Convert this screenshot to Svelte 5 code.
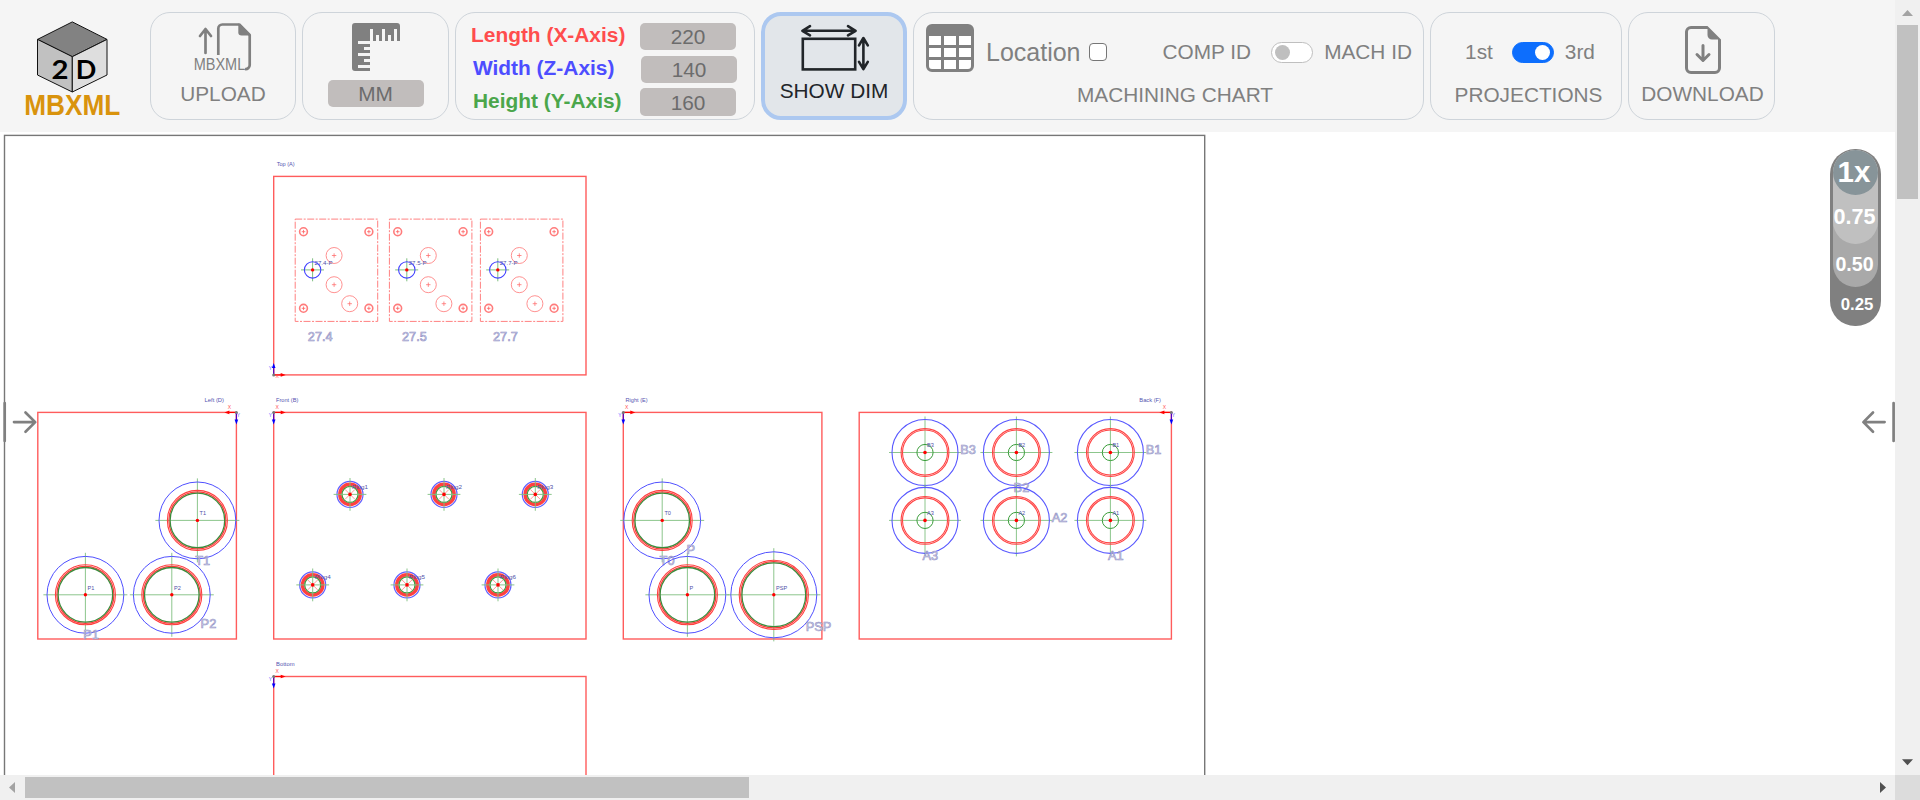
<script>
  const plates = [
    { dx: 0, name: '27.4' },
    { dx: 94.2, name: '27.5' },
    { dx: 185.2, name: '27.7' }
  ];
  const plateBolts = [[303.5, 231.7], [368.9, 231.7], [303.5, 308.3], [368.9, 308.3]];
  const platePorts = [[334.1, 255.5], [334.1, 284.7], [349.7, 303.7]];

  const views = [
    { x: 273.7, y: 176.4, w: 312.3, h: 198.5, title: 'Top (A)', tx: 276.7, ty: 166.3, tw: 18 },
    { x: 37.8, y: 412.4, w: 198.6, h: 226.6, title: 'Left (D)', tx: 204.5, ty: 402.2, tw: 19.5 },
    { x: 273.7, y: 412.4, w: 312.3, h: 226.6, title: 'Front (B)', tx: 276, ty: 402.2, tw: 22.3 },
    { x: 623.3, y: 412.4, w: 198.6, h: 226.6, title: 'Right (E)', tx: 625.6, ty: 402.2, tw: 22 },
    { x: 859.2, y: 412.4, w: 312.2, h: 226.6, title: 'Back (F)', tx: 1139.3, ty: 402.2, tw: 21.7 },
    { x: 273.7, y: 676.5, w: 312.3, h: 226.6, title: 'Bottom', tx: 276, ty: 666.3, tw: 18.5 }
  ];

  const axes = [
    { x: 273.7, y: 374.9, sx: 1, sy: -1 },
    { x: 236.4, y: 412.4, sx: -1, sy: 1 },
    { x: 273.7, y: 412.4, sx: 1, sy: 1 },
    { x: 623.3, y: 412.4, sx: 1, sy: 1 },
    { x: 1171.4, y: 412.4, sx: -1, sy: 1 },
    { x: 273.7, y: 676.5, sx: 1, sy: 1 }
  ];

  const ports = [
    { x: 197.4, y: 520.4, r: 38.4, name: 'T1', lx: 195.3, ly: 564.7 },
    { x: 85.4, y: 594.8, r: 38.4, name: 'P1', lx: 83.2, ly: 638.7 },
    { x: 171.8, y: 594.8, r: 38.4, name: 'P2', lx: 200.6, ly: 628 },
    { x: 662.2, y: 520.4, r: 38.4, name: 'T0', lx: 659.6, ly: 564.5 },
    { x: 687.4, y: 594.8, r: 38.4, name: 'P', lx: 686.5, ly: 553.6 },
    { x: 773.8, y: 594.8, r: 43, name: 'PSP', lx: 805.8, ly: 631 }
  ];

  const plugs = [
    { x: 350, y: 494.4 }, { x: 444, y: 494.4 }, { x: 535.3, y: 494.4 },
    { x: 312.7, y: 584.9 }, { x: 407, y: 584.9 }, { x: 498, y: 584.9 }
  ];

  const backs = [
    { x: 925, y: 452.5, name: 'B3', lx: 960.3, ly: 454 },
    { x: 1016.4, y: 452.5, name: 'B2', lx: 1013.6, ly: 492 },
    { x: 1110.4, y: 452.5, name: 'B1', lx: 1145.7, ly: 454 },
    { x: 925, y: 520.4, name: 'A3', lx: 922.5, ly: 560.2 },
    { x: 1016.4, y: 520.4, name: 'A2', lx: 1051.7, ly: 522.2 },
    { x: 1110.4, y: 520.4, name: 'A1', lx: 1108, ly: 560.2 }
  ];
</script>

<div class="app">
  <header class="toolbar">
    <svg class="logo" width="150" height="132" viewBox="0 0 150 132">
      <g stroke="#111" stroke-width="1" stroke-linejoin="round">
        <path d="M72.3 21.9 107 39.4 72.3 56.7 37.5 39.4Z" fill="#828282" />
        <path d="M37.5 39.4 72.3 56.7V92L37.5 75Z" fill="#c1c1c1" />
        <path d="M107 39.4 72.3 56.7V92L107 75Z" fill="#dedede" />
      </g>
      <text class="cube" x="51.5" y="78.8" textLength="17" lengthAdjust="spacingAndGlyphs">2</text>
      <text class="cube" x="75.8" y="78.8">D</text>
      <text class="brand" x="24.2" y="114.7" textLength="96" lengthAdjust="spacingAndGlyphs">MBXML</text>
    </svg>

    <button class="card upload">
      <svg width="60" height="50" viewBox="193 22 60 50">
        <g fill="none" stroke="#808080" stroke-width="2.7" stroke-linecap="round" stroke-linejoin="round">
          <path d="M205.5 53V29M200 36l5.5-7 5.5 7" />
          <path stroke-linecap="butt" d="M218.3 55V28.5a4 4 0 0 1 4-4h17L249.7 35V65a4 4 0 0 1-4.7 4" />
        </g>
        <path d="M238.3 23.3 250.8 35.5h-9.3a3.2 3.2 0 0 1-3.2-3.2Z" fill="#808080" />
        <text class="mini" x="193.7" y="69.8" textLength="51.5" lengthAdjust="spacingAndGlyphs">MBXML</text>
      </svg>
      <span class="caption">UPLOAD</span>
    </button>

    <button class="card unit">
      <svg width="48" height="48" viewBox="0 0 16 16" fill="#808080">
        <path d="M1 0a1 1 0 0 0-1 1v14a1 1 0 0 0 1 1h5v-1H2v-1h4v-1H4v-1h2v-1H2v-1h4V9H4V8h2V7H2V6h4V2h1v4h1V4h1v2h1V2h1v4h1V4h1v2h1V2h1v4h1V1a1 1 0 0 0-1-1z" />
      </svg>
      <span class="field">MM</span>
    </button>

    <section class="card dims">
      <div class="row"><b class="x">Length (X-Axis)</b><span class="field">220</span></div>
      <div class="row"><b class="z">Width (Z-Axis)</b><span class="field shifted">140</span></div>
      <div class="row"><b class="y">Height (Y-Axis)</b><span class="field tall">160</span></div>
    </section>

    <button class="card show">
      <svg width="70" height="50" viewBox="800 23 70 50" fill="none" stroke="#212529" stroke-width="2.6" stroke-linecap="round" stroke-linejoin="round">
        <rect x="802.8" y="38.8" width="52.4" height="30.6" stroke-linejoin="miter" />
        <path d="M803 30.8H855M810 26.2l-7.6 4.6 7.6 4.6M848 26.2l7.6 4.6-7.6 4.6" />
        <path d="M863.4 38.5V68.5M859 45.3l4.4-7.3 4.4 7.3M859 61.8l4.4 7.3 4.4-7.3" />
      </svg>
      <span class="caption">SHOW DIM</span>
    </button>

    <section class="card chart">
      <div class="top">
        <svg class="table" width="48" height="48" viewBox="0 0 16 16">
          <rect x="1" y="3" width="14" height="12" fill="#fff" />
          <path fill="#808080" d="M0 2a2 2 0 0 1 2-2h12a2 2 0 0 1 2 2v12a2 2 0 0 1-2 2H2a2 2 0 0 1-2-2zm15 2h-4v3h4zm0 4h-4v3h4zm0 4h-4v3h3a1 1 0 0 0 1-1zm-5 3v-3H6v3zm-5 0v-3H1v2a1 1 0 0 0 1 1zm-4-4h4V8H1zm0-4h4V4H1zm5-3v3h4V4zm4 4H6v3h4z" />
        </svg>
        <span class="location">Location</span>
        <span class="check"></span>
        <span class="caption comp">COMP ID</span>
        <span class="switch"></span>
        <span class="caption mach">MACH ID</span>
      </div>
      <span class="caption title">MACHINING CHART</span>
    </section>

    <section class="card projections">
      <div class="top">
        <span class="caption">1st</span>
        <span class="switch on"></span>
        <span class="caption">3rd</span>
      </div>
      <span class="caption title">PROJECTIONS</span>
    </section>

    <button class="card download">
      <svg width="48" height="48" viewBox="0 0 16 16" fill="#808080">
        <path d="M8.5 6.5a.5.5 0 0 0-1 0v3.793L6.354 9.146a.5.5 0 1 0-.708.708l2 2a.5.5 0 0 0 .708 0l2-2a.5.5 0 0 0-.708-.708L8.5 10.293z" />
        <path d="M14 14V4.5L9.5 0H4a2 2 0 0 0-2 2v12a2 2 0 0 0 2 2h8a2 2 0 0 0 2-2M9.5 3A1.5 1.5 0 0 0 11 4.5h2V14a1 1 0 0 1-1 1H4a1 1 0 0 1-1-1V2a1 1 0 0 1 1-1h5.5z" />
      </svg>
      <span class="caption">DOWNLOAD</span>
    </button>
  </header>

  <div class="vbar">
    <svg width="25" height="25"><path d="M7 16l5.5-6 5.5 6z" fill="#a3a3a3" /></svg>
    <div class="vthumb"></div>
    <svg class="end" width="25" height="25"><path d="M7 9.3l5.5 6 5.5-6z" fill="#505050" /></svg>
  </div>

  <main class="canvas">
    <svg class="drawing" width="1895" height="643" viewBox="0 132 1895 643">
      <rect x="4.5" y="135.4" width="1200.2" height="900" fill="#fff" stroke="#777" stroke-width="1.4" />

      {#each views as v}
        <rect x={v.x} y={v.y} width={v.w} height={v.h} fill="none" stroke="#ff5c5c" stroke-width="1.4" />
        <text class="vtitle" x={v.tx} y={v.ty} textLength={v.tw} lengthAdjust="spacingAndGlyphs">{v.title}</text>
      {/each}

      {#each plates as p}
        <g transform="translate({p.dx} 0)">
          <rect x="295.2" y="219.1" width="82.5" height="102.3" fill="none" stroke="#ff8080" stroke-width="1" stroke-dasharray="7 1.5 2 1.5" />
          {#each plateBolts as [x, y]}
            <circle cx={x} cy={y} r="3.9" fill="none" stroke="#ff7c7c" stroke-width="1.6" />
            <path d="M{x - 1.8} {y}h3.6M{x} {y - 1.8}v3.6" stroke="#ff6060" stroke-width=".8" />
          {/each}
          {#each platePorts as [x, y]}
            <circle cx={x} cy={y} r="8" fill="none" stroke="#ff8585" stroke-width=".9" />
            <path d="M{x - 2.2} {y}h4.4M{x} {y - 2.2}v4.4" stroke="#ff7070" stroke-width=".8" />
          {/each}
          <path d="M301 269.9h23M312.6 258.3v23" stroke="#5fb05f" stroke-width=".8" />
          <circle cx="312.6" cy="269.9" r="8.2" fill="none" stroke="#4040ff" stroke-width="1.1" />
          <circle cx="312.6" cy="269.9" r="1.7" fill="#f00" />
          <text class="tag" x="314.5" y="265" textLength="18" lengthAdjust="spacingAndGlyphs">{p.name}-P</text>
          <text class="label" x="307.8" y="341.4" textLength="24.8" lengthAdjust="spacingAndGlyphs">{p.name}</text>
        </g>
      {/each}

      {#each ports as p}
        <path d="M{p.x - p.r - 3.6} {p.y}h{2 * p.r + 7.2}M{p.x} {p.y - p.r - 3.6}v{2 * p.r + 7.2}" stroke="#7fbf7f" stroke-width=".9" />
        <g fill="none">
          <circle cx={p.x} cy={p.y} r={p.r} stroke="#5050ff" stroke-width="1" />
          <circle cx={p.x} cy={p.y} r={p.r - 8.4} stroke="#ff4040" stroke-width="1.1" />
          <circle cx={p.x} cy={p.y} r={p.r - 9.9} stroke="#ff3838" stroke-width="1.2" />
          <circle cx={p.x} cy={p.y} r={p.r - 11.1} stroke="#3c8a3c" stroke-width="1.3" />
        </g>
        <circle cx={p.x} cy={p.y} r="1.7" fill="#f00" />
        <text class="tag" x={p.x + 2.2} y={p.y - 5.2}>{p.name}</text>
        <text class="label" x={p.lx} y={p.ly}>{p.name}</text>
      {/each}

      {#each plugs as p, i}
        <g fill="none">
          <circle cx={p.x} cy={p.y} r="13" stroke="#6060ff" stroke-width="1.2" />
          <circle cx={p.x} cy={p.y} r="10.2" stroke="#ff4040" stroke-width="3.4" />
          <circle cx={p.x} cy={p.y} r="8" stroke="#3f9a3f" stroke-width="1.2" />
          <path d="M{p.x - 5} {p.y - 5}l10 10m0-10l-10 10" stroke="#ff8080" stroke-width=".8" />
          <path d="M{p.x - 16.4} {p.y}h32.8M{p.x} {p.y - 16.4}v32.8" stroke="#7fbf7f" stroke-width=".9" />
        </g>
        <circle cx={p.x} cy={p.y} r="1.8" fill="#f00" />
        <text class="tag" x={p.x + 2} y={p.y - 5.5} textLength="16" lengthAdjust="spacingAndGlyphs">Plug{i + 1}</text>
      {/each}

      {#each backs as b}
        <path d="M{b.x - 36} {b.y}h72M{b.x} {b.y - 36}v72" stroke="#7fbf7f" stroke-width=".9" />
        <g fill="none">
          <circle cx={b.x} cy={b.y} r="33" stroke="#5858ff" stroke-width="1.1" />
          <circle cx={b.x} cy={b.y} r="23.9" stroke="#ff4444" stroke-width="1.1" />
          <circle cx={b.x} cy={b.y} r="22.5" stroke="#ff4444" stroke-width="1.1" />
          <circle cx={b.x} cy={b.y} r="8.1" stroke="#3a9d3a" stroke-width="1" />
        </g>
        <circle cx={b.x} cy={b.y} r="1.8" fill="#f00" />
        <text class="tag" x={b.x + 2} y={b.y - 5.2}>{b.name}</text>
        <text class="label" x={b.lx} y={b.ly}>{b.name}</text>
      {/each}

      {#each axes as a}
        <path d="M{a.x} {a.y}h{a.sx * 8}" stroke="#f00" stroke-width="1.2" />
        <path d="M{a.x + a.sx * 12} {a.y}l{-a.sx * 5} -1.8v3.6z" fill="#f00" />
        <path d="M{a.x} {a.y}v{a.sy * 8}" stroke="#5000c0" stroke-width="1.2" />
        <path d="M{a.x} {a.y + a.sy * 12}l-1.8 {-a.sy * 5}h3.6z" fill="#00f" />
        <circle cx={a.x} cy={a.y} r="1.5" fill="#777" />
        <text class="ax red" x={a.x + (a.sx > 0 ? 1.7 : -8.6)} y={a.y + (a.sy > 0 ? -3.6 : 3)}>X</text>
        <text class="ax blue" x={a.x + (a.sx > 0 ? -5 : .4)} y={a.y + (a.sy > 0 ? 4.4 : -5)}>Y</text>
      {/each}

      <g stroke="#808080" stroke-width="2.7" fill="none" stroke-linecap="round" stroke-linejoin="round">
        <path d="M4.7 403V441M14 422.1H35M25.5 412.5l9.7 9.6-9.7 9.6" />
        <path d="M1893.6 403V441M1884.6 422.1H1864M1873 412.5l-9.6 9.6 9.6 9.6" />
      </g>
    </svg>

    <div class="zoom">
      <div class="half">
        <div class="three">
          <div class="full">1x</div>
          <span>0.75</span>
        </div>
        <span>0.50</span>
      </div>
      <span class="quarter">0.25</span>
    </div>
  </main>

  <div class="hbar">
    <svg width="25" height="25"><path d="M15 7l-6 5.5 6 5.5z" fill="#a3a3a3" /></svg>
    <div class="hthumb"></div>
    <svg class="end" width="25" height="25"><path d="M10 7l6 5.5-6 5.5z" fill="#505050" /></svg>
  </div>
  <div class="corner"></div>
</div>

<style>
  :global(body) { margin: 0; overflow: hidden; background: #fff; }
  .app {
    display: grid;
    grid-template: 132px 643px 25px / 1895px 25px;
    width: 1920px;
    height: 800px;
    overflow: hidden;
    font-family: "Liberation Sans", Arial, sans-serif;
    color: #808080;
  }
  .app * { box-sizing: border-box; }
  svg { display: block; flex: none; }
  .toolbar { grid-area: 1 / 1; background: #f5f5f5; display: flex; gap: 6px; padding-top: 12px; align-items: flex-start; }
  .logo { margin: -12px -6px 0 0; }
  .cube { font: 700 27px Lato, sans-serif; fill: #000; }
  .brand { font: 700 30px "Liberation Sans", sans-serif; fill: #d9930d; }
  .mini { font: 16.5px "Liberation Sans", sans-serif; fill: #808080; }
  .card {
    display: flex; flex-direction: column; align-items: center;
    height: 108px; margin: 0; padding: 0; flex: none;
    border: 1px solid #ced4da; border-radius: 20px;
    background: transparent; font: inherit; color: inherit;
  }
  .caption { font-size: 20.8px; line-height: 24px; white-space: nowrap; }
  .field {
    display: block; width: 96px; height: 27px; border-radius: 5px; background: #c1bdbc;
    color: #6c6c6c; font-size: 20.8px; line-height: 28px; text-align: center;
  }
  .upload { width: 146px; padding-top: 9px; }
  .upload .caption { margin-top: 10px; }
  .unit { width: 147px; padding-top: 10px; }
  .unit .field { margin-top: 9px; }
  .dims { width: 300px; align-items: stretch; padding: 10px 18px 0 15px; gap: 6px; }
  .row { display: flex; justify-content: space-between; height: 27px; }
  .row b { font-size: 20.9px; line-height: 24px; white-space: nowrap; }
  .x { color: #ff4d4d; }
  .z { color: #4d4dff; margin-left: 2px; }
  .y { color: #4ba64b; margin-left: 2px; }
  .shifted { margin-right: -1px; }
  .tall { height: 28px; margin-top: -1px; line-height: 29px; }
  .show { width: 146px; border: 4px solid #acc8f0; background: #e2e6ea; color: #212529; padding-top: 7px; }
  .show svg { margin-left: 1px; }
  .show .caption { margin-top: 6px; }
  .chart { width: 511px; }
  .top { display: flex; align-items: center; height: 54px; margin-top: 12px; }
  .chart .top { width: 509px; padding-left: 12px; }
  .table { margin-top: -8px; }
  .location { font-size: 25px; line-height: 28px; margin-left: 12px; }
  .check { width: 18px; height: 18px; border: 1.5px solid #767676; border-radius: 4px; background: #fff; margin: 0 0 1px 8px; }
  .comp { margin-left: 56px; }
  .switch { display: flex; align-items: center; width: 42px; height: 21px; padding: 0 3px; border-radius: 11px; border: 1px solid #bfbfbf; background: #fff; margin-left: 20px; }
  .switch::before { content: ""; width: 15px; height: 15px; border-radius: 50%; background: #bfbfbf; }
  .on { background: #0d6efd; border-color: #0d6efd; justify-content: flex-end; }
  .on::before { background: #fff; }
  .mach { margin-left: 11px; }
  .title { margin-top: 4px; }
  .chart .title { padding-left: 13px; }
  .projections { width: 192px; }
  .projections .top { padding-left: 8px; }
  .projections .title { padding-left: 5px; }
  .projections .on { margin: 0 11px 0 19px; }
  .download { width: 147px; padding: 13px 0 0 2px; }
  .download .caption { margin-top: 8px; }

  .vbar { grid-area: 1 / 2 / 3 / 3; background: #f0f0f0; display: flex; flex-direction: column; align-items: center; }
  .vthumb { width: 21px; height: 174px; background: #c1c1c1; }
  .vbar .end { margin-top: auto; }
  .hbar { grid-area: 3 / 1; background: #f0f0f0; display: flex; align-items: center; }
  .hthumb { width: 724px; height: 21px; background: #c1c1c1; }
  .hbar .end { margin-left: auto; }
  .corner { grid-area: 3 / 2; background: #dcdcdc; }

  .canvas { grid-area: 2 / 1; position: relative; overflow: hidden; }
  .vtitle { font-size: 5.8px; fill: #5454b0; }
  .tag { font-size: 5.6px; fill: #5050a8; }
  .label { font-size: 12.8px; fill: #dcdcee; stroke: #9292c6; stroke-width: .6px; }
  .ax { font-size: 5px; }
  .red { fill: #ff5050; }
  .blue { fill: #6060ff; }

  .zoom {
    position: absolute; top: 17px; right: 14px; width: 51px; height: 177px;
    padding: 1px 3px; border-radius: 25px; background: #808080;
    color: #fff; font-weight: 700; text-align: center;
  }
  .half { height: 137px; border-radius: 23px; background: #a9a9a9; font-size: 19.6px; line-height: 40px; }
  .three { height: 94px; border-radius: 23px; background: #c0c0c0; font-size: 21.6px; line-height: 43px; }
  .full { height: 45px; border-radius: 50%; background: #879499; font-size: 29.5px; line-height: 43px; padding-right: 3px; }
  .three span, .half > span { position: relative; left: -1px; }
  .quarter { display: block; font-size: 16.8px; line-height: 36px; padding-left: 3px; }
</style>
